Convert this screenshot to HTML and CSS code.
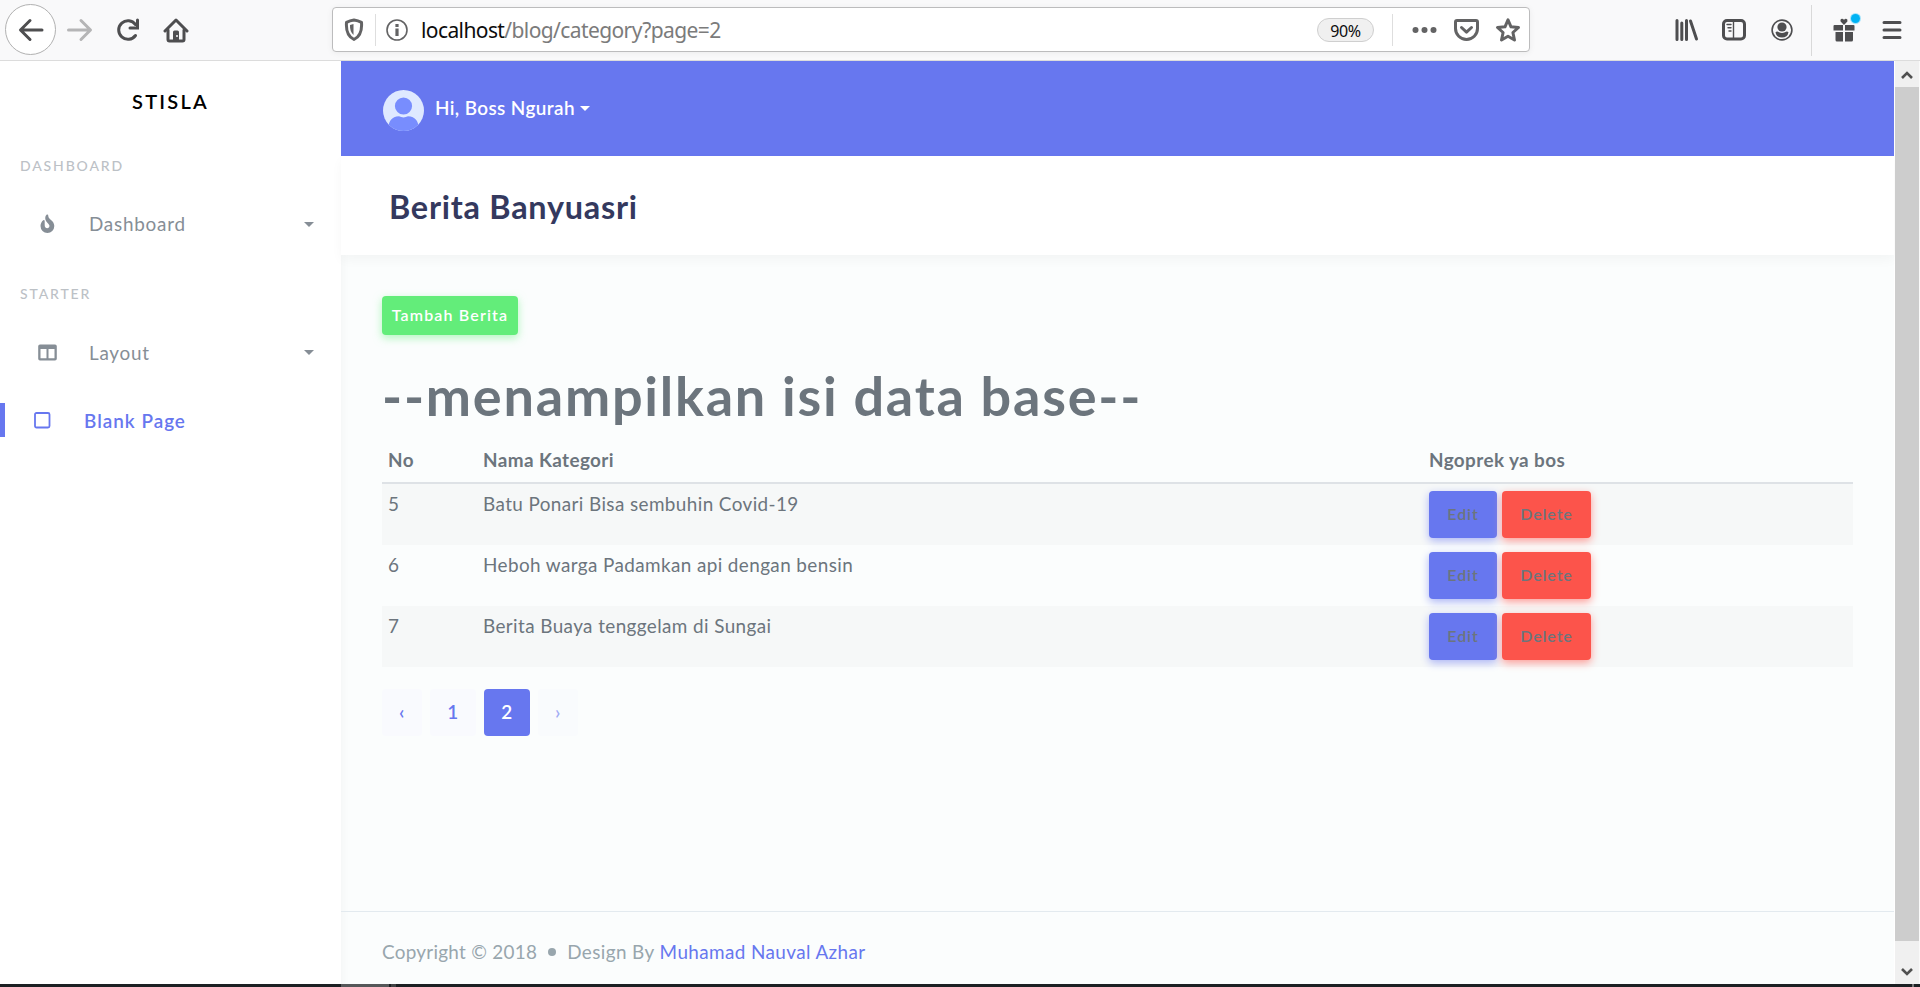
FILE: index.html
```html
<!DOCTYPE html>
<html lang="id">
<head>
<meta charset="utf-8">
<title>Blank Page</title>
<link rel="stylesheet" href="styles.css">
</head>
<body>
<header class="toolbar">
  <div class="nav-buttons">
    <span class="back"><svg width="26" height="24" viewBox="0 0 26 24"><path d="M24 12H3M12 2.500L2.500 12L12 21.500"/></svg></span>
    <svg class="forward" width="26" height="24" viewBox="0 0 26 24"><path d="M1.500 12H22M14 2.500L23.500 12L14 21.500"/></svg>
    <svg class="reload" width="24" height="24" viewBox="0 0 24 24"><path d="M19.500 17.500A9.300 9.300 0 1 1 19.500 6.500"/><path d="M21.500 2v8H14" stroke-linejoin="miter"/></svg>
    <svg class="home" width="26" height="26" viewBox="0 0 26 26"><path d="M2 14L13 3L24 14"/><path d="M5 13v9.500q0 1.500 1.500 1.500h13q1.500 0 1.500-1.500V13"/><path class="solid" d="M10 24v-9q0-1.500 1.500-1.500h3q1.500 0 1.500 1.500v9z"/><circle class="knob" cx="14" cy="19" r="1"/></svg>
  </div>
  <div class="urlbar">
    <svg class="shield" width="20" height="24" viewBox="0 0 20 24"><path d="M10 2Q14 2.600 17.500 4.300Q18.500 17.500 10 21.500Q1.500 17.500 2.500 4.300Q6 2.600 10 2z"/><path class="solid" d="M9.500 6L6 7Q5.700 13.500 9.500 17z"/></svg>
    <i class="bar-line"></i>
    <svg class="info" width="22" height="22" viewBox="0 0 22 22"><circle cx="11" cy="11" r="10"/><path class="solid" d="M9.400 5h3.200v3H9.400zM9.400 9.500h3.200V17H9.400z"/></svg>
    <span class="url"><b>localhost</b>/blog/category?page=2</span>
    <span class="zoom">90%</span>
    <i class="bar-line second"></i>
    <svg class="dots" width="25" height="8" viewBox="0 0 25 8"><circle cx="3.500" cy="4" r="3"/><circle cx="12.500" cy="4" r="3"/><circle cx="21.500" cy="4" r="3"/></svg>
    <svg class="pocket" width="25" height="22" viewBox="0 0 25 22"><path d="M3 1.500h19q1.500 0 1.500 1.500v6.500a11 11 0 0 1-22 0V3q0-1.500 1.500-1.500z"/><path d="M7.500 8.500l5 4.700l5-4.700"/></svg>
    <svg class="star" width="26" height="26" viewBox="0 0 26 26"><path d="M13 2.800L16 9.800L23.500 10.500L17.900 15.500L19.500 23L13 19.200L6.500 23L8.100 15.500L2.500 10.500L10 9.800z"/></svg>
  </div>
  <div class="tools">
    <svg class="library" width="24" height="24" viewBox="0 0 24 24"><path d="M2 2.500v19M6.800 5v16.500M11.500 2.500v19M15.500 3L21.500 21"/></svg>
    <svg class="sidebar-icon" width="24" height="22" viewBox="0 0 24 22"><rect x="1.500" y="1.500" width="21" height="18.500" rx="3.500"/><path class="thin" d="M11.500 2v18M5 5.500h4M6 8.700h3M7 12h2"/></svg>
    <svg class="account" width="22" height="22" viewBox="0 0 22 22"><circle cx="11" cy="11" r="9.900"/><circle class="solid" cx="11" cy="8" r="4.600"/><path class="solid" d="M4.500 13.200q1.500-1.200 3.500 0q3 1.500 6 0q2-1.200 3.500 0q-1 5.300-6.500 5.300t-6.500-5.300z"/></svg>
    <i class="tool-line"></i>
    <span class="gift"><svg width="22" height="24" viewBox="0 0 22 24"><path d="M1.500 7H10v5.500H.500V8q0-1 1-1zM12 7h8.500q1 0 1 1v4.500H12zM2.500 14H10v9.500H4q-1.500 0-1.500-1.500zM12 14h8v8q0 1.500-1.500 1.500H12zM11 7L7.600 3.500Q7 1 9 .800Q10.500.800 11 2Q11.500.800 13 .800Q15 1 14.400 3.500z"/></svg><i class="badge"></i></span>
    <svg class="menu" width="20" height="20" viewBox="0 0 20 20"><path d="M2 2.500h16M2 10h16M2 17.500h16"/></svg>
  </div>
</header>
<div class="viewport">
  <aside class="sidebar">
    <div class="brand">STISLA</div>
    <div class="menu-header">DASHBOARD</div>
    <a class="item"><svg class="item-icon" width="15" height="20" viewBox="0 0 15 20"><path class="fill" fill-rule="evenodd" d="M6.800.600Q8.300.200 8.300 2C8.300 5.300 14.300 6.600 14.300 12a6.900 6.900 0 0 1-13.800 0C.500 9.500 1.700 7.600 3.200 6.300Q4.600 5.600 4.700 7.200V10.500Q4.500 14.300 7.400 14.300Q9.500 14.100 9.500 12Q9.500 10.900 8.300 9.700C6.800 8.200 5.200 6.500 5.200 4Q5.200 1.800 6.800.600z"/></svg><span class="label">Dashboard</span><i class="caret"></i></a>
    <div class="menu-header starter">STARTER</div>
    <a class="item layout"><svg class="item-icon" width="19" height="17" viewBox="0 0 19 17"><path class="fill" fill-rule="evenodd" d="M2 .500h15q1.800 0 1.800 1.800v12.400q0 1.800-1.800 1.800H2q-1.800 0-1.800-1.800V2.300Q.200.500 2 .500zM2.500 5v9.200h6V5zM10.500 5v9.200h6V5z"/></svg><span class="label">Layout</span><i class="caret"></i></a>
    <a class="item active"><svg class="item-icon" width="17" height="17" viewBox="0 0 17 17"><rect x="1" y="1" width="14.500" height="14.500" rx="1.500"/></svg><span class="label">Blank Page</span></a>
  </aside>
  <main class="main">
    <nav class="navbar">
      <svg class="avatar" width="41" height="41" viewBox="0 0 41 41"><defs><clipPath id="round"><circle cx="20.500" cy="20.500" r="20.500"/></clipPath></defs><g clip-path="url(#round)"><rect width="41" height="41" fill="#dfe9ff"/><circle cx="20.500" cy="16" r="8.600" fill="#788dfe"/><path d="M5 41Q5 26.500 16 26.300Q20.500 28.500 25 26.300Q36 26.500 36 41z" fill="#788dfe"/></g></svg>
      <span class="user">Hi, Boss Ngurah</span><i class="caret light"></i>
    </nav>
    <section class="page-head"><h1 class="page-title">Berita Banyuasri</h1></section>
    <section class="content">
      <a class="btn add">Tambah Berita</a>
      <h1 class="headline">--menampilkan isi data base--</h1>
      <table class="table">
        <colgroup><col class="c-no"><col class="c-name"><col></colgroup>
        <thead><tr><th>No</th><th>Nama Kategori</th><th>Ngoprek ya bos</th></tr></thead>
        <tbody>
          <tr><td>5</td><td>Batu Ponari Bisa sembuhin Covid-19</td><td><div class="actions"><a class="btn edit">Edit</a><a class="btn delete">Delete</a></div></td></tr>
          <tr><td>6</td><td>Heboh warga Padamkan api dengan bensin</td><td><div class="actions"><a class="btn edit">Edit</a><a class="btn delete">Delete</a></div></td></tr>
          <tr><td>7</td><td>Berita Buaya tenggelam di Sungai</td><td><div class="actions"><a class="btn edit">Edit</a><a class="btn delete">Delete</a></div></td></tr>
        </tbody>
      </table>
      <div class="pagination"><a class="page arrow">‹</a><a class="page">1</a><a class="page current">2</a><a class="page arrow disabled">›</a></div>
    </section>
    <footer class="footer"><span class="copyright">Copyright © 2018</span><i class="bullet"></i><span>Design By</span><a class="author">Muhamad Nauval Azhar</a></footer>
  </main>
  <div class="scrollbar">
    <span class="arrow-box"><svg width="12" height="10" viewBox="0 0 12 10"><path d="M1 8L6 3L11 8"/></svg></span>
    <span class="thumb"></span>
    <span class="arrow-box down"><svg width="12" height="10" viewBox="0 0 12 10"><path d="M1 2L6 7L11 2"/></svg></span>
  </div>
</div>
<div class="taskbar"><i class="task"></i><i class="task small"></i><i class="task end"></i></div>
</body>
</html>
```
FILE: styles.css
```css
* { box-sizing: border-box; }
body { margin: 0; width: 1920px; height: 987px; overflow: hidden; display: flex; flex-direction: column; background: #fff; color: #6c757d; font: 400 18.900px/28px Lato, "Open Sans", sans-serif; letter-spacing: .400px; }
svg { display: block; flex: none; fill: none; stroke-linecap: round; stroke-linejoin: round; }
i { display: block; flex: none; }

/* browser toolbar */
.toolbar { flex: none; height: 61px; display: flex; background: #f9f9fa; border-bottom: 1px solid #dcdcdc; }
.toolbar svg { stroke: #4e4e50; stroke-width: 3; }
.toolbar .solid { fill: #4e4e50; stroke: none; }
.nav-buttons { width: 332px; height: 60px; display: flex; align-items: center; padding-left: 5px; }
.back { width: 51px; height: 51px; border: 1px solid #b1b1b1; border-radius: 50%; background: #fff; display: flex; align-items: center; justify-content: center; margin-top: -1px; }
.toolbar .forward { margin-left: 11px; stroke: #b5b5b6; }
.reload { margin-left: 23px; }
.home { margin-left: 23px; }
.toolbar .knob { fill: #f9f9fa; stroke: none; }
.urlbar { width: 1198px; height: 45px; margin-top: 7px; display: flex; align-items: center; border: 1px solid #bcbcbd; border-radius: 4px; background: #fff; box-shadow: 0 1px 6px rgba(0, 0, 0, .06); }
.urlbar svg { stroke: #636364; }
.urlbar .solid, .urlbar .dots { fill: #636364; stroke: none; }
.shield { margin-left: 11px; }
.bar-line { width: 1px; height: 32px; margin-left: 11px; background: #dedede; }
.toolbar .info { margin-left: 10px; stroke-width: 1.600; }
.url { width: 896px; margin-left: 13px; font: 400 21px/30px "Noto Sans", sans-serif; letter-spacing: -.600px; color: #7b7b7b; white-space: nowrap; }
.url b { font-weight: 400; color: #0c0c0d; }
.zoom { width: 57px; height: 24px; border: 1px solid #cfcfcf; border-radius: 12px; background: #f0f0f0; color: #0c0c0d; font: 400 16px/24px "Noto Sans", sans-serif; letter-spacing: -.400px; text-align: center; }
.bar-line.second { margin-left: 18px; }
.dots { margin-left: 19px; }
.pocket { margin-left: 17px; }
.star { margin-left: 16px; }
.tools { display: flex; align-items: center; height: 60px; padding-left: 145px; }
.sidebar-icon { margin-left: 23px; }
.toolbar .thin { stroke-width: 1.400; }
.account { margin-left: 25px; }
.toolbar .account { stroke-width: 1.600; }
.tool-line { width: 1px; height: 51px; margin-left: 18px; background: #d9d9d9; }
.gift { position: relative; margin-left: 21px; }
.toolbar .gift svg { fill: #4e4e50; stroke: none; }
.badge { position: absolute; left: 18px; top: -4px; width: 9px; height: 9px; border-radius: 50%; background: #00b3f4; box-shadow: 0 0 0 1px #a5e3fb; }
.menu { margin-left: 27px; }

.viewport { flex: 1; min-height: 0; display: flex; }

/* sidebar */
.sidebar { width: 341px; flex: none; background: #fff; color: #868e96; }
.brand { height: 81px; line-height: 80px; text-align: center; color: #000; font-weight: 600; font-size: 20px; letter-spacing: 2.200px; }
.menu-header { height: 48px; padding: 10px 0 0 20px; font-size: 14px; font-weight: 500; letter-spacing: 1.850px; color: #bcc1c6; }
.item { height: 68px; display: flex; align-items: center; padding: 0 27px 0 30px; }
.item .fill { fill: #868e96; }
.item-icon { width: 35px; }
.label { margin-left: 24px; letter-spacing: .750px; }
.caret { width: 0; height: 0; border: 5px solid transparent; border-top-color: currentColor; border-bottom: 0; margin-left: auto; }
.starter { margin-top: 12px; }
.layout .label { padding-top: 2px; }
.active { color: #6777ef; font-weight: 600; padding-left: 25px; position: relative; }
.active .label { padding-top: 2px; letter-spacing: 1px; }
.active svg { stroke: #6777ef; stroke-width: 1.800; }
.active::before { content: ""; position: absolute; left: 0; top: 17px; width: 5px; height: 34px; background: #6777ef; }

/* main column */
.main { width: 1553px; flex: none; display: flex; flex-direction: column; background: #fbfdfd; box-shadow: inset 12px 0 10px -10px rgba(0, 0, 0, .03); }
.navbar { flex: none; height: 95px; display: flex; align-items: center; padding: 3px 0 0 42px; background: #6777ef; color: #fff; font-weight: 600; }
.user { margin: -5px 0 0 11px; }
.caret.light { margin: -3px 0 0 5px; }
.page-head { flex: none; height: 99px; background: #fff; padding-left: 48px; box-shadow: 0 5px 11px rgba(0, 0, 0, .035); }
.page-title { margin: 0; font: 700 32.400px/102px Lato, sans-serif; letter-spacing: .750px; color: #34395e; }
.content { flex: 1; padding: 41px 41px 0; display: flex; flex-direction: column; align-items: flex-start; }
.btn { display: flex; align-items: center; justify-content: center; padding-bottom: 1px; border-radius: 4px; font-size: 16px; font-weight: 600; letter-spacing: .900px; }
.add { width: 136px; height: 39px; background: #63ed7a; color: #fff; letter-spacing: 1.150px; box-shadow: 0 3px 8px rgba(129, 244, 149, .6); }
.headline { margin: 28px 0 0; font: 700 54px/65px Lato, sans-serif; letter-spacing: 1.780px; color: #6c757d; white-space: nowrap; }
.table { width: 1471px; margin-top: 10px; border-collapse: separate; border-spacing: 0; table-layout: fixed; }
.c-no { width: 94px; }
.c-name { width: 946px; }
th { height: 46px; padding: 0 6px 0 7px; text-align: left; font-weight: 700; border-bottom: 2px solid #dee2e6; }
td { height: 61px; padding: 6px 6px 0 7px; vertical-align: top; white-space: nowrap; }
td:first-child, th:first-child { padding-left: 6px; }
tbody tr:nth-child(odd) { background: #f6f8f8; }
.actions { display: flex; gap: 5px; padding-top: 1px; }
.edit { width: 68px; height: 47px; background: #6777ef; box-shadow: 0 3px 8px #acb5f6; }
.delete { width: 89px; height: 47px; background: #fc544b; box-shadow: 0 3px 8px #fd9b96; }
.pagination { display: flex; gap: 8px; margin-top: 22px; }
.page { width: 46px; height: 47px; line-height: 45px; border-radius: 4px; background: #f9fafe; color: #6777ef; text-align: center; font-weight: 600; }
.arrow { width: 40px; }
.current { background: #6777ef; color: #fff; }
.disabled { opacity: .6; }
.footer { flex: none; height: 73px; display: flex; align-items: center; padding: 7px 0 0 41px; border-top: 1px solid #e3eaef; color: #98a6ad; }
.copyright { letter-spacing: .270px; }
.bullet { width: 8px; height: 8px; border-radius: 50%; background: #98a6ad; margin: 0 11px; }
.author { margin-left: 5px; color: #6777ef; }

/* scrollbar */
.scrollbar { width: 25px; margin-left: 1px; border-right: 1px solid #fafafa; background: #f0f0f0; display: flex; flex-direction: column; }
.arrow-box { height: 26px; display: flex; align-items: center; justify-content: center; padding-top: 2px; }
.arrow-box svg { stroke: #505050; stroke-width: 2.600; stroke-linecap: butt; stroke-linejoin: miter; }
.thumb { height: 854px; background: #cdcdcd; }
.down { height: 43px; padding-top: 19px; }

.taskbar { flex: none; height: 3px; display: flex; background: #1c2023; padding-left: 341px; }
.task { width: 48px; background: #555759; margin-right: 2px; }
.small { width: 5px; background: #404244; }
.end { width: 2px; margin: 0 6px 0 auto; background: #777; }
```
